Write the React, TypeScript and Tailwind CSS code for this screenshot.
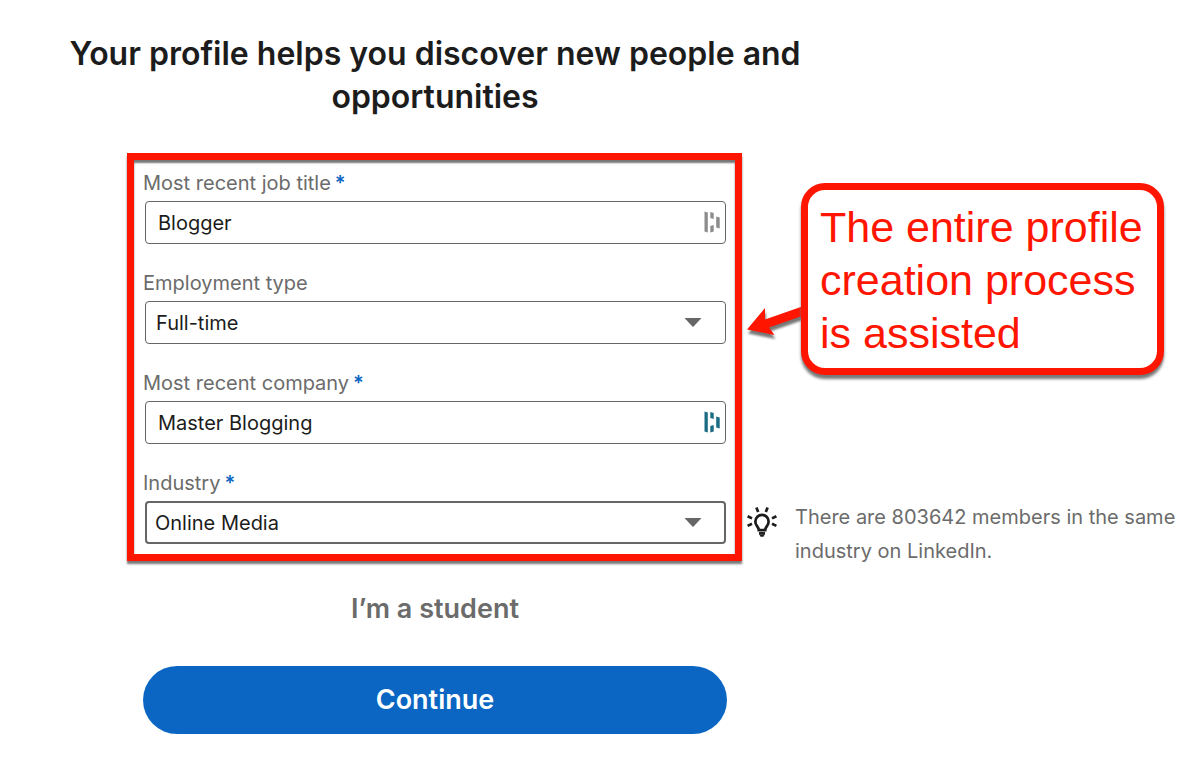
import { useState } from "react";
import type { ReactNode } from "react";

interface FieldProps {
  id: string;
  label: string;
  required?: boolean;
  children: ReactNode;
}

const EMPLOYMENT_TYPES = ["Full-time", "Part-time", "Self-employed", "Freelance", "Internship"];
const INDUSTRIES = ["Online Media", "Internet", "Marketing and Advertising", "Publishing"];

const CONTROL =
  "block w-full h-[43px] rounded-sm bg-white text-[20px] text-[#1c1c1c] focus:outline-none";

function Field({ id, label, required, children }: FieldProps) {
  return (
    <div className="flex flex-col gap-1.5">
      <label htmlFor={id} className="h-6 text-[20px] leading-6 text-[#6b6b6b]">
        {label}
        {required && <span className="ml-1 font-semibold text-[#0a66c2]">*</span>}
      </label>
      <div className="relative ml-0.5">{children}</div>
    </div>
  );
}

function BarsIcon({ className }: { className: string }) {
  return (
    <svg
      viewBox="0 0 16 22"
      className={`absolute top-2.5 right-1.5 w-4 h-[22px] ${className}`}
      fill="currentColor"
      aria-hidden="true"
    >
      <path d="M0.500 0.500l3.300 1v20l-3.300-1z" />
      <path d="M6.300 1l3.400 1v6L6.300 7z" />
      <path d="M6.300 15l3.400-1v6.500L6.300 21.500z" />
      <path d="M12.200 5.500l3.500 1v11l-3.500-1z" />
    </svg>
  );
}

function Caret() {
  return (
    <svg
      viewBox="0 0 18 9"
      className="absolute top-[17px] right-6 w-[18px] h-[9px] text-[#666] pointer-events-none"
      fill="currentColor"
      aria-hidden="true"
    >
      <path d="M0.500 0h17L9.600 8.500a0.900 0.900 0 0 1-1.200 0z" />
    </svg>
  );
}

function BulbIcon() {
  return (
    <svg
      viewBox="0 0 32 32"
      className="w-8 h-8 shrink-0"
      fill="none"
      stroke="#1c1c1c"
      strokeWidth="2.7"
      aria-hidden="true"
    >
      <path d="M12.800 24.200c0-2-1-3.200-2-4.500A6.600 6.600 0 0 1 9.400 15.400a6.600 6.600 0 0 1 13.200 0c0 1.600-.5 3-1.400 4.300-1 1.300-2 2.500-2 4.500z" />
      <path d="M13 27.400h6" />
      <path d="M13.500 28.700h5l-1 2h-3z" fill="#1c1c1c" stroke="none" />
      <path d="M12.200 6L10.400 1.600M19.800 6L21.600 1.600M6 12.400L1.600 10.300M26 12.400l4.400-2.100M6 17.800l-4.400 2.100M26 17.800l4.400 2.100" />
    </svg>
  );
}

export default function App() {
  const [jobTitle, setJobTitle] = useState("Blogger");
  const [employment, setEmployment] = useState("Full-time");
  const [company, setCompany] = useState("Master Blogging");
  const [industry, setIndustry] = useState("Online Media");

  return (
    <main className="bg-white pt-8 pb-8 font-['Inter',sans-serif]">
      <h1 className="pr-[330px] text-center text-[32px] leading-[43px] font-semibold text-[#1c1c1c]">
        Your profile helps you discover new people and
        <br />
        opportunities
      </h1>

      <div className="mt-[35px] grid grid-cols-[minmax(0,1fr)_458px]">
        <form className="pl-[127px]" onSubmit={(e) => e.preventDefault()}>
          <div className="flex flex-col gap-[27px] border-[7px] border-[#ff1500] px-[9px] pt-[11px] pb-2.5 shadow-[0_3px_2px_#777,inset_0_3px_2px_#777]">
            <Field id="job-title" label="Most recent job title" required>
              <input
                id="job-title"
                type="text"
                value={jobTitle}
                onChange={(e) => setJobTitle(e.target.value)}
                className={`${CONTROL} border border-[#666] px-3`}
              />
              <BarsIcon className="text-[#8c8c8c]" />
            </Field>

            <Field id="employment" label="Employment type">
              <select
                id="employment"
                value={employment}
                onChange={(e) => setEmployment(e.target.value)}
                className={`${CONTROL} appearance-none border border-[#666] px-2.5`}
              >
                {EMPLOYMENT_TYPES.map((t) => (
                  <option key={t}>{t}</option>
                ))}
              </select>
              <Caret />
            </Field>

            <Field id="company" label="Most recent company" required>
              <input
                id="company"
                type="text"
                value={company}
                onChange={(e) => setCompany(e.target.value)}
                className={`${CONTROL} border border-[#666] px-3`}
              />
              <BarsIcon className="text-[#1b6b85]" />
            </Field>

            <Field id="industry" label="Industry" required>
              <select
                id="industry"
                value={industry}
                onChange={(e) => setIndustry(e.target.value)}
                className={`${CONTROL} appearance-none border-2 border-[#666] px-2`}
              >
                {INDUSTRIES.map((t) => (
                  <option key={t}>{t}</option>
                ))}
              </select>
              <Caret />
            </Field>
          </div>

          {/* Actions */}
          <div className="flex flex-col items-center pt-8 pr-[15px] pl-4">
            <button type="button" className="text-[27px] leading-8 font-semibold text-[#6b6b6b]">
              I’m a student
            </button>
            <button
              type="submit"
              className="mt-[41px] h-[68px] w-full rounded-full bg-[#0a66c2] text-[27px] font-semibold text-white"
            >
              Continue
            </button>
          </div>
        </form>

        <aside className="pt-[30px]">
          <div className="relative ml-[59px] mr-9">
            {/* Arrow that points back at the form */}
            <svg
              viewBox="0 0 58 40"
              className="absolute top-[122px] -left-[54px] w-[58px] h-10 drop-shadow-[1px_4px_1px_#777]"
              fill="#ff1500"
              aria-hidden="true"
            >
              <path d="M0 24.500L18 3v11.500L58 0.500v9.500L22 22.500l5.500 7.500z" />
            </svg>
            <div className="relative rounded-3xl border-[7px] border-[#ff1500] bg-white px-3 pt-[11px] pb-2 shadow-[0_4px_3px_#777]">
              <p className="font-['Liberation_Sans',sans-serif] text-[43px] leading-[53px] text-[#ff1500]">
                The entire profile
                <br />
                creation process
                <br />
                is assisted
              </p>
            </div>
          </div>

          <div className="mt-[125px] flex gap-[17px] pl-1">
            <div className="pt-1.5">
              <BulbIcon />
            </div>
            <p className="text-[20px] leading-[34px] text-[#6b6b6b]">
              There are 803642 members in the same
              <br />
              industry on LinkedIn.
            </p>
          </div>
        </aside>
      </div>
    </main>
  );
}
